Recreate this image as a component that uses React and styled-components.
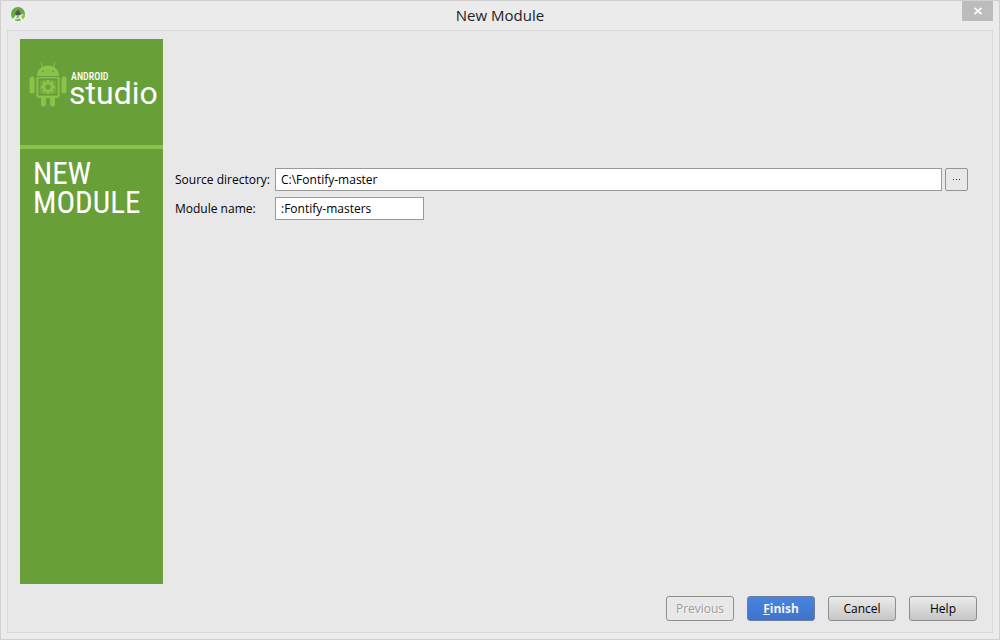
import styled, { createGlobalStyle } from 'styled-components';

function App() {
  return (
    <>
      <GlobalStyle />
      <Window>
        <TitleBar>
          <AppIcon />
          <Title>New Module</Title>
          <CloseButton type="button" aria-label="Close">
            <svg width="10" height="8" viewBox="0 0 10 8" aria-hidden="true">
              <path d="M1.5 0.8 8.5 7.2M8.5 0.8 1.5 7.2" stroke="#fff" strokeWidth="1.8" />
            </svg>
          </CloseButton>
        </TitleBar>
        <Dialog>
          <Content>
            <Sidebar>
              <Brand>
                <Robot />
                <BrandText>
                  <BrandSmall>ANDROID</BrandSmall>
                  <BrandLarge>studio</BrandLarge>
                </BrandText>
              </Brand>
              <StepTitle>NEW MODULE</StepTitle>
            </Sidebar>
            <Form id="module-form" onSubmit={(e) => e.preventDefault()}>
              <Label htmlFor="source">Source directory:</Label>
              <FieldRow>
                <TextField id="source" defaultValue="C:\Fontify-master" />
                <BrowseButton type="button" aria-label="Browse">
                  <svg width="9" height="3" viewBox="0 0 9 3" aria-hidden="true">
                    <path d="M1 1h1v1H1zM4 1h1v1H4zM7 1h1v1H7z" fill="#333" />
                  </svg>
                </BrowseButton>
              </FieldRow>
              <Label htmlFor="name">Module name:</Label>
              <FieldRow>
                <TextField id="name" $width="149px" defaultValue=":Fontify-masters" />
              </FieldRow>
            </Form>
          </Content>
          <Footer>
            <Button type="button" disabled>Previous</Button>
            <PrimaryButton type="submit" form="module-form"><u>F</u>inish</PrimaryButton>
            <Button type="button">Cancel</Button>
            <Button type="button">Help</Button>
          </Footer>
        </Dialog>
      </Window>
    </>
  );
}

export default App;

function AppIcon() {
  return (
    <svg width="16" height="16" viewBox="0 0 16 16" aria-hidden="true">
      <circle cx="8" cy="7" r="7" fill="#64ad3c" />
      <path d="M8 7 15 7A7 7 0 0 1 9 14z" fill="#8cc152" />
      <path d="M5.5 8V5.5L8 2.5l2.5 3V8z" fill="#4d5b57" />
      <path d="M6.500 8.500 2.500 15M9.500 8.500l3.500 6.500" stroke="#f4f6f4" strokeWidth="1.7" />
      <path d="M3.500 11q5 2.500 9-4" stroke="#e5e9e4" strokeWidth="1.4" fill="none" />
    </svg>
  );
}

function Robot() {
  const teeth = [0, 45, 90, 135];

  return (
    <svg width="38" height="46" viewBox="0 0 38 46" fill="#8bc34a" aria-hidden="true">
      <path d="M12 1.5 14 5.5M26 1.5 24 5.5" stroke="#8bc34a" strokeWidth="1" strokeLinecap="round" />
      <path d="M8 14C8 7.500 13 3.500 19 3.500S30 7.500 30 14z" />
      <circle cx="14" cy="9.500" r="1" fill="#689f38" />
      <circle cx="24" cy="9.500" r="1" fill="#689f38" />
      <rect x="0.500" y="14.500" width="5" height="17" rx="2.500" />
      <rect x="32.500" y="14.500" width="5" height="17" rx="2.500" />
      <rect x="12" y="33" width="5" height="11.500" rx="2" />
      <rect x="21" y="33" width="5" height="11.500" rx="2" />
      <path d="M7.500 15h23v18.500q0 2.500-2.500 2.500H10Q7.500 36 7.500 33.500z" />
      <rect x="10" y="17" width="18" height="16" fill="#74a93c" stroke="#5f9433" />
      {teeth.map((angle) => (
        <rect key={angle} x="17.5" y="18" width="3" height="14" transform={`rotate(${angle} 19 25)`} />
      ))}
      <circle cx="19" cy="25" r="5.300" />
      <circle cx="19" cy="25" r="2.600" fill="#689f38" />
    </svg>
  );
}

const GlobalStyle = createGlobalStyle`
  * {
    box-sizing: border-box;
  }

  body {
    margin: 0;
    font-family: 'Open Sans', 'Noto Sans', sans-serif;
    font-size: 12px;
    color: #000;
  }

  button,
  input {
    font: inherit;
  }
`;

const Window = styled.div`
  display: flex;
  flex-direction: column;
  min-height: 100vh;
  padding: 0 6px 6px;
  background: #ebebeb;
  border: 1px solid #d0d0d0;
`;

const TitleBar = styled.header`
  display: grid;
  grid-template-columns: 32px 1fr 32px;
  align-items: start;
  height: 29px;

  > svg {
    margin: 6px 0 0 3px;
  }
`;

const Title = styled.h1`
  margin: 0;
  font-size: 15px;
  line-height: 28px;
  font-weight: 400;
  text-align: center;
  color: #222;
`;

const CloseButton = styled.button`
  display: flex;
  align-items: center;
  justify-content: center;
  justify-self: end;
  width: 31px;
  height: 20px;
  padding: 0;
  border: 0;
  background: #bcbcbc;
`;

const Dialog = styled.main`
  display: flex;
  flex: 1;
  flex-direction: column;
  padding: 8px 15px 11px 12px;
  background: #e8e8e8;
  border: 1px solid #d9d9d9;
`;

const Content = styled.div`
  display: flex;
  flex: 1;
  gap: 12px;
`;

const Sidebar = styled.aside`
  flex: none;
  width: 143px;
  background: #689f38;
  color: #fff;
`;

const Brand = styled.div`
  display: flex;
  gap: 2px;
  height: 110px;
  padding: 23px 0 0 9px;
  border-bottom: 4px solid #8bc34a;
`;

const BrandText = styled.div`
  display: flex;
  flex-direction: column;
  padding-top: 9px;
`;

const BrandSmall = styled.span`
  padding-left: 2px;
  font-family: 'Roboto Condensed', 'Liberation Sans Narrow', Roboto, sans-serif;
  font-size: 10px;
  line-height: 12px;
  font-weight: 500;
`;

const BrandLarge = styled.span`
  font-family: Roboto, sans-serif;
  font-size: 32px;
  line-height: 20px;
`;

const StepTitle = styled.h2`
  margin: 0;
  padding: 10px 13px;
  font-family: 'Roboto Condensed', 'Liberation Sans Narrow', Roboto, sans-serif;
  font-size: 31px;
  line-height: 29px;
  font-weight: 400;
`;

const Form = styled.form`
  display: grid;
  flex: 1;
  grid-template-columns: 100px 1fr;
  grid-auto-rows: 23px;
  row-gap: 6px;
  align-items: center;
  padding: 129px 9px 0 0;
`;

const Label = styled.label`
  white-space: nowrap;
`;

const FieldRow = styled.div`
  display: flex;
  gap: 3px;
`;

const TextField = styled.input`
  flex: ${(props) => (props.$width ? 'none' : 1)};
  width: ${(props) => props.$width || 'auto'};
  min-width: 0;
  height: 23px;
  padding: 0 5px;
  border: 1px solid #999;
  background: #fff;
  color: #000;
  outline: none;
`;

const BrowseButton = styled.button`
  display: flex;
  align-items: center;
  justify-content: center;
  width: 23px;
  height: 23px;
  padding: 0;
  border: 1px solid #949494;
  border-radius: 2px;
  background: #e8e8e8;
`;

const Footer = styled.footer`
  display: flex;
  justify-content: flex-end;
  gap: 13px;
  padding-top: 12px;
`;

const Button = styled.button`
  width: 68px;
  height: 25px;
  padding: 0;
  border: 1px solid #8e8e8e;
  border-radius: 3px;
  background: linear-gradient(#eaeaea, #c6c6c6);
  color: #000;

  &:disabled {
    background: #e8e8e8;
    color: #9b9b9b;
    text-shadow: 1px 1px #f8f8f8;
  }
`;

const PrimaryButton = styled(Button)`
  border-color: #6d7e9c;
  background: linear-gradient(#4984e2, #3f73cb);
  color: #f2f2f2;
  font-weight: 700;
`;
